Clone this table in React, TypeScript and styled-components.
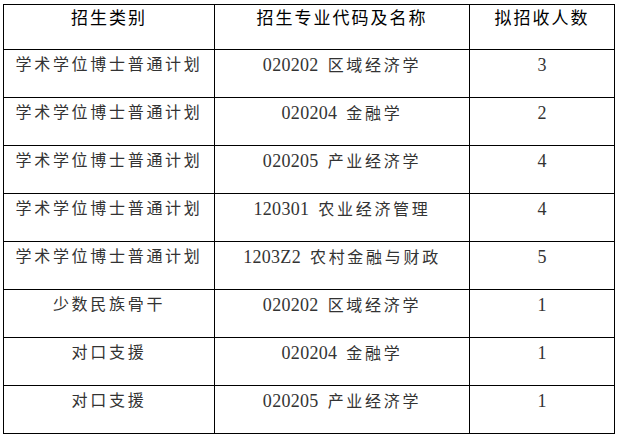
import React from "react";
import styled, { createGlobalStyle } from "styled-components";

const GlobalStyle = createGlobalStyle`
  html, body {
    margin: 0;
    padding: 0;
    background: #ffffff;
  }
  body {
    font-family: "Liberation Serif", "Noto Sans CJK SC", serif;
  }
`;

const Page = styled.div`
  padding: 4px 0 0 3px;
`;

const Grid = styled.div`
  display: grid;
  grid-template-columns: 211px 255px 145px;
  grid-template-rows: 45px;
  grid-auto-rows: 48px;
  width: max-content;
  border-top: 1px solid #000;
  border-left: 1px solid #000;
`;

const Cell = styled.div<{ $head?: boolean }>`
  box-sizing: border-box;
  border-right: 1px solid #000;
  border-bottom: 1px solid #000;
  padding-top: ${(p) => (p.$head ? 2 : 3)}px;
  text-align: center;
  white-space: nowrap;
  font-family: "Liberation Serif", "Noto Sans CJK SC", serif;
  font-size: ${(p) => (p.$head ? 17 : 16)}px;
  line-height: 24px;
  letter-spacing: ${(p) => (p.$head ? 2 : 2.7)}px;
  color: ${(p) => (p.$head ? "#000" : "#333")};
`;

const Code = styled.span`
  font-size: 18px;
  letter-spacing: 0.3px;
  margin-right: 9px;
`;

const Count = styled.span`
  font-size: 18px;
  letter-spacing: 0;
`;

type Row = { kind: string; code: string; name: string; count: number };

const rows: Row[] = [
  { kind: "学术学位博士普通计划", code: "020202", name: "区域经济学", count: 3 },
  { kind: "学术学位博士普通计划", code: "020204", name: "金融学", count: 2 },
  { kind: "学术学位博士普通计划", code: "020205", name: "产业经济学", count: 4 },
  { kind: "学术学位博士普通计划", code: "120301", name: "农业经济管理", count: 4 },
  { kind: "学术学位博士普通计划", code: "1203Z2", name: "农村金融与财政", count: 5 },
  { kind: "少数民族骨干", code: "020202", name: "区域经济学", count: 1 },
  { kind: "对口支援", code: "020204", name: "金融学", count: 1 },
  { kind: "对口支援", code: "020205", name: "产业经济学", count: 1 },
];

export default function App() {
  return (
    <>
      <GlobalStyle />
      <Page>
        <Grid>
          <Cell $head>招生类别</Cell>
          <Cell $head>招生专业代码及名称</Cell>
          <Cell $head>拟招收人数</Cell>
          {rows.map((r, i) => (
            <React.Fragment key={i}>
              <Cell>{r.kind}</Cell>
              <Cell>
                <Code>{r.code}</Code>
                {r.name}
              </Cell>
              <Cell>
                <Count>{r.count}</Count>
              </Cell>
            </React.Fragment>
          ))}
        </Grid>
      </Page>
    </>
  );
}
